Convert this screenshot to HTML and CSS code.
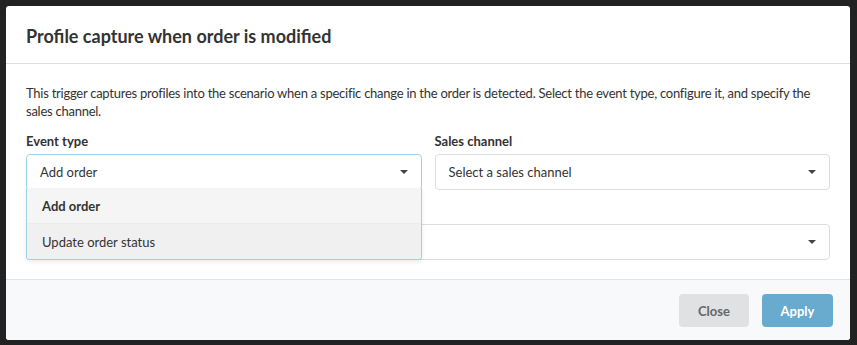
FILE: index.html
```html
<!DOCTYPE html>
<html lang="en">
<head>
  <meta charset="UTF-8">
  <meta name="viewport" content="width=device-width, initial-scale=1">
  <title>Profile capture</title>
  <link rel="stylesheet" href="styles.css">
</head>
<body>
  <div class="modal">
    <div class="modal-header">
      <div class="modal-title">Profile capture when order is modified</div>
    </div>
    <div class="modal-body">
      <p class="intro">This trigger captures profiles into the scenario when a specific change in the order is detected. Select the event type, configure it, and specify the sales channel.</p>
      <div class="row">
        <div class="field">
          <div class="label">Event type</div>
          <div class="select-wrap">
            <div class="select focused">
              <span>Add order</span>
              <span class="caret"></span>
            </div>
            <!-- Open dropdown list -->
            <ul class="menu">
              <li class="menu-item selected">Add order</li>
              <li class="menu-item hover">Update order status</li>
            </ul>
          </div>
        </div>
        <div class="field">
          <div class="label">Sales channel</div>
          <div class="select">
            <span>Select a sales channel</span>
            <span class="caret"></span>
          </div>
        </div>
      </div>
      <div class="field">
        <!-- label sits behind the open menu -->
        <div class="label label-spacer"></div>
        <div class="select">
          <span></span>
          <span class="caret"></span>
        </div>
      </div>
    </div>
    <div class="modal-footer">
      <button class="btn btn-close">Close</button>
      <button class="btn btn-apply">Apply</button>
    </div>
  </div>
</body>
</html>
```

FILE: styles.css
```css
body {
  font-family: Lato, "Liberation Sans", sans-serif;
  background: #222222;
  margin: 0;
  padding: 6px 7px 6px 6px;
  color: #333;
}
.modal {
  background: #fff;
  border-radius: 3px;
  overflow: hidden;
}
.modal-header {
  padding: 0 20px;
  height: 57px;
  display: flex;
  align-items: center;
  border-bottom: 1px solid #dedede;
}
.modal-title {
  font-size: 18px;
  font-weight: bold;
  color: #333;
  padding-top: 2px;
}
.modal-body {
  padding: 20px 20px 19px;
}
.intro {
  margin: 0 0 13px;
  font-size: 13px;
  line-height: 18px;
  letter-spacing: -0.25px;
  color: #333;
}
.row {
  display: grid;
  grid-template-columns: 1fr 1fr;
  gap: 13px;
  margin-bottom: 13px;
}
.label {
  font-size: 13px;
  font-weight: bold;
  color: #333;
  margin-bottom: 5px;
  line-height: 16px;
}
.label-spacer {
  height: 16px;
}
.select-wrap {
  position: relative;
}
.select {
  height: 36px;
  box-sizing: border-box;
  border: 1px solid #dddddd;
  border-radius: 4px;
  display: flex;
  align-items: center;
  justify-content: space-between;
  padding: 0 13px;
  font-size: 13px;
  color: #333;
}
.select.focused {
  border-color: #9fd0e3;
}
.caret {
  width: 0;
  height: 0;
  border-left: 4px solid transparent;
  border-right: 4px solid transparent;
  border-top: 4px solid #444;
}
.menu {
  position: absolute;
  top: 34px;
  left: 0;
  right: 0;
  list-style: none;
  margin: 0;
  padding: 0;
  background: #fff;
  border: 1px solid #9fd0e3;
  border-top: none;
  border-radius: 0 0 4px 4px;
  box-shadow: 0 2px 4px rgba(0,0,0,0.08);
  z-index: 2;
  overflow: hidden;
}
.menu-item {
  height: 35px;
  display: flex;
  align-items: center;
  padding: 0 15px;
  font-size: 13px;
  color: #333;
  background: #f5f5f5;
}
.menu-item.selected {
  font-weight: bold;
  border-bottom: 1px solid #ececec;
  height: 35px;
}
.menu-item.hover {
  background: #f0f0f0;
}
.modal-footer {
  background: #f8f9fb;
  border-top: 1px solid #e3e3e3;
  padding: 14px 17px 13px;
  display: flex;
  justify-content: flex-end;
  gap: 13px;
}
.btn {
  font-family: inherit;
  font-size: 13px;
  font-weight: bold;
  border: none;
  border-radius: 4px;
  height: 33px;
  cursor: pointer;
}
.btn-close {
  background: #e0e1e3;
  color: #666;
  width: 70px;
}
.btn-apply {
  background: #68abcf;
  color: #fff;
  width: 71px;
}
```
